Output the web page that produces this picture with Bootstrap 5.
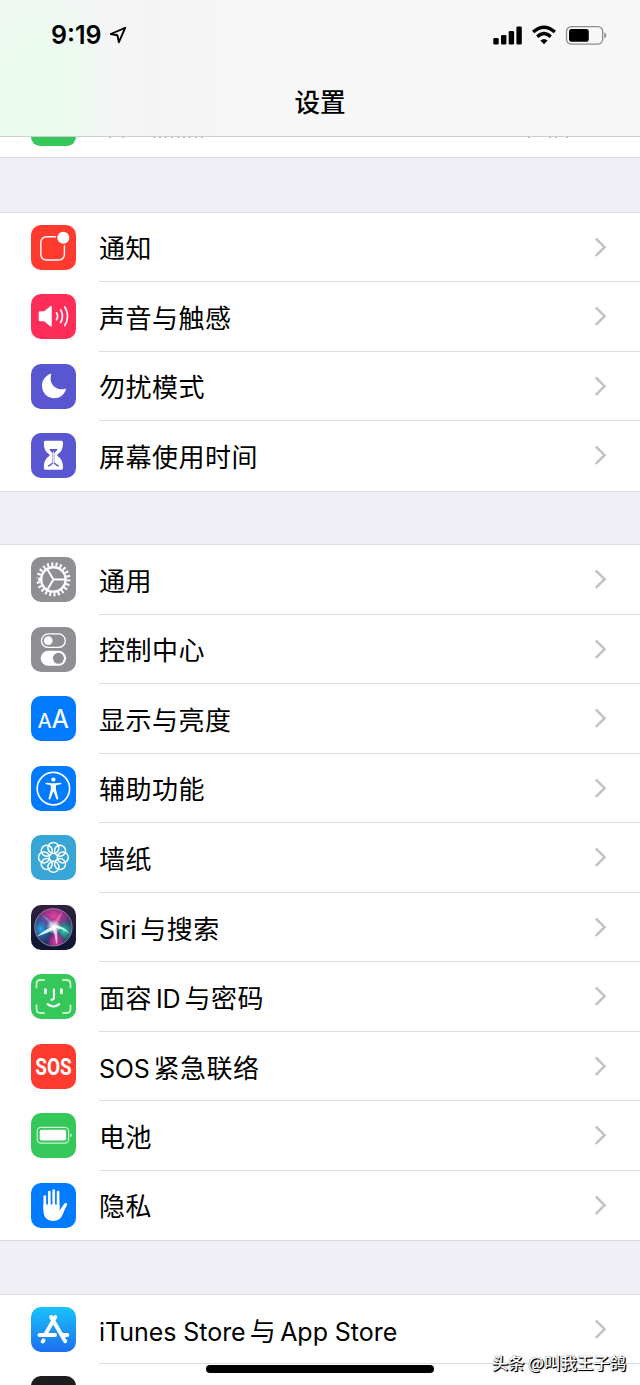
<!DOCTYPE html>
<html lang="zh-CN">
<head>
  <meta charset="UTF-8" />
  <meta name="viewport" content="width=device-width, initial-scale=1.0" />
  <title>设置</title>
  <link href="https://cdn.jsdelivr.net/npm/bootstrap@5.3.0/dist/css/bootstrap.min.css" rel="stylesheet" />
  <style>
    body {
      height: 1385px;
      color: #000;
      background: #f0eff5;
      font-family: Inter, "Noto Sans CJK SC", sans-serif;
    }

    .top-bar {
      height: 137px;
      background:
        radial-gradient(ellipse 75px 125px at 40px 100px, #eafced 0%, rgba(234, 252, 237, 0.8) 45%, rgba(234, 252, 237, 0) 100%),
        linear-gradient(90deg, #f1f8f4 0, #f4f6f5 80px, #f4f4f4 150px, #f7f7f7 250px);
      border-bottom: 1px solid #cfcfd1;
    }

    .status {
      height: 69px;
      padding: 0 33px 0 51px;
    }

    .clock {
      padding-top: 2px;
      font-size: 25px;
      font-weight: 600;
    }

    .page-title {
      height: 67px;
      padding-bottom: 2px;
      font-family: "Noto Sans CJK SC", sans-serif;
      font-size: 25.6px;
      font-weight: 500;
    }

    .peek {
      height: 21px;
      padding-left: 31px;
      border-bottom: 1px solid #dcdce0;
    }

    .peek-icon {
      width: 45px;
      height: 9px;
      background: #35c759;
      border-radius: 0 0 10px 10px;
    }

    .group {
      margin-top: 52.5px;
      border-top: 1px solid #dcdce0;
      border-bottom: 1px solid #dcdce0;
    }

    .group:first-child {
      margin-top: 53.5px;
    }

    .setting {
      height: 69.5px;
      padding-left: 31px;
    }

    .setting-body {
      margin-left: 23px;
      padding-right: 33px;
      border-bottom: 1px solid #dedee1;
    }

    .setting:last-child .setting-body {
      border-bottom-color: transparent;
    }

    .app-icon {
      width: 45px;
      height: 45px;
      border-radius: 10px;
      overflow: visible;
    }

    .chevron {
      width: 13px;
      height: 22px;
      fill: none;
      stroke: #c3c3c6;
      stroke-width: 2.5;
    }

    .label {
      font-family: "Noto Sans CJK SC", sans-serif;
      font-size: 26px;
      line-height: 38px;
      letter-spacing: 0.5px;
      padding-top: 1px;
      white-space: nowrap;
    }

    .label.mixed {
      padding-top: 4px;
    }

    .label span {
      font-family: Inter, sans-serif;
      font-size: 25px;
      letter-spacing: -0.2px;
    }

    .label .wide {
      letter-spacing: -0.05px;
    }

    .c-red { background: #ff3b30; }
    .c-pink { background: #ff2d58; }
    .c-indigo { background: #5856d0; }
    .c-gray { background: #8e8e93; }
    .c-blue { background: #007aff; }
    .c-sky { background: #37a6d6; }
    .c-green { background: #35c759; }
    .c-store { background: linear-gradient(#19c3fb, #1c6ff0); }
    .c-dark { background: #1d1d1f; }

    .home-bar {
      left: 206px;
      top: 1365px;
      width: 228px;
      height: 8px;
      background: #000;
    }

    .watermark {
      right: 14px;
      top: 1350px;
      font-family: "Noto Sans CJK SC", sans-serif;
      font-size: 16.4px;
      line-height: 24px;
      font-weight: 500;
      color: #fff;
      text-shadow: 1px 1px 0 #000, 1px 1px 1px #000, 0 0 1px #555;
    }
  </style>
</head>
<body class="position-relative overflow-hidden">
  <svg class="d-none">
    <symbol id="chevron" viewBox="0 0 13 22"><path d="M1.8 2.500L10.6 11.200 1.8 19.900" /></symbol>
  </svg>

  <header class="top-bar">
    <div class="status d-flex align-items-center justify-content-between">
      <div class="d-flex align-items-center gap-2">
        <span class="clock">9:19</span>
        <svg width="18" height="18" viewBox="0 0 18 18" fill="none" stroke="#000" stroke-width="1.9" stroke-linejoin="round"><path d="M.7 8L15.200 1.800 8.900 16.200 7.400 9.300z" /></svg>
      </div>
      <svg width="115" height="22" viewBox="0 0 115 22">
        <rect x="1.3" y="14" width="5.4" height="6.5" rx="1.3" />
        <rect x="9" y="11" width="5.4" height="9.5" rx="1.3" />
        <rect x="16.7" y="7" width="5.4" height="13.5" rx="1.3" />
        <rect x="24.4" y="2.5" width="5.4" height="18" rx="1.3" />
        <g fill="none" stroke="#000" stroke-width="3.4">
          <path d="M41.200 8.100Q52 -1.500 62.800 8.100" />
          <path d="M45.300 12.700Q52 6.300 58.700 12.700" />
        </g>
        <path d="M48.400 16.500Q52 13.400 55.600 16.500L52 20.200z" />
        <rect x="74.5" y="2.6" width="36.2" height="17.6" rx="5" fill="none" stroke="#8d8d8d" stroke-width="1.3" />
        <rect x="77" y="5.1" width="19.8" height="12.6" rx="2.8" />
        <path d="M112.3 8.3q2 1 2 3.1t-2 3.1z" fill="#8d8d8d" />
      </svg>
    </div>
    <h1 class="page-title d-flex align-items-center justify-content-center m-0">设置</h1>
  </header>

  <div class="peek bg-white d-flex align-items-start">
    <div class="peek-icon"></div>
    <svg width="500" height="1" viewBox="0 0 500 1" stroke="#bbb"><path d="M33 .5h5M46 .5h4M77 .5h52M452 .5h4M473 .5h9M490 .5h6" stroke-dasharray="2 4" /></svg>
  </div>

  <main>
    <section class="group bg-white">
      <div class="setting d-flex align-items-center">
        <svg class="app-icon c-red flex-shrink-0" viewBox="0 0 45 45">
          <rect x="9.8" y="11.8" width="23.6" height="23.2" rx="5.5" fill="none" stroke="#fff" stroke-width="1.4" />
          <circle cx="32.3" cy="12.8" r="7.4" fill="#ff3b30" />
          <circle cx="32.3" cy="12.8" r="6" fill="#fff" />
        </svg>
        <div class="setting-body d-flex flex-grow-1 align-items-center justify-content-between h-100">
          <div class="label">通知</div>
          <svg class="chevron"><use href="#chevron" /></svg>
        </div>
      </div>
      <div class="setting d-flex align-items-center">
        <svg class="app-icon c-pink flex-shrink-0" viewBox="0 0 45 45">
          <path d="M9 17.3h4.2l6.3-5.3q1.3-.9 1.3.6v19.2q0 1.5-1.3.6l-6.3-5.2H9q-1.3 0-1.3-1.3v-7.3q0-1.3 1.3-1.3z" fill="#fff" />
          <path d="M25.500 18.800Q27.700 22.200 25.500 25.700M29.600 15.900Q33.400 22.200 29.600 28.600M33.800 13Q39.400 22.200 33.800 31.500" fill="none" stroke="#fff" stroke-width="1.700" stroke-linecap="round" />
        </svg>
        <div class="setting-body d-flex flex-grow-1 align-items-center justify-content-between h-100">
          <div class="label">声音与触感</div>
          <svg class="chevron"><use href="#chevron" /></svg>
        </div>
      </div>
      <div class="setting d-flex align-items-center">
        <svg class="app-icon c-indigo flex-shrink-0" viewBox="0 0 45 45">
          <path d="M19.5 9.7C14.4 11.6 11 16.3 11 21.7 11 28.7 16.5 34.2 23.3 34.2 28.6 34.2 33.1 30.9 34.9 25.7 35.1 24.7 34.6 24.5 33.8 24.8 25.6 27.4 17.2 20.4 20.2 10.6 20.4 9.8 20.2 9.5 19.5 9.7z" fill="#fff" />
        </svg>
        <div class="setting-body d-flex flex-grow-1 align-items-center justify-content-between h-100">
          <div class="label">勿扰模式</div>
          <svg class="chevron"><use href="#chevron" /></svg>
        </div>
      </div>
      <div class="setting d-flex align-items-center">
        <svg class="app-icon c-indigo flex-shrink-0" viewBox="0 0 45 45">
          <path d="M14.200 7.800h16.400q1.400 0 1.400 1.900 0 8.600-5.200 11.500-1.600 1 0 2 5.200 3 5.200 11.600 0 1.900-1.400 1.900H14.200q-1.400 0-1.400-1.900 0-8.600 5.200-11.600 1.600-1 0-2-5.200-2.900-5.200-11.500 0-1.900 1.400-1.900z" fill="#fff" />
          <path d="M18.300 16h8.200q-.8 2.300-2.700 3.500-.5.400-.5.900v9.200l4.500 2.800v1H17v-1l4.500-2.800v-9.200q0-.5-.5-.9-1.900-1.200-2.700-3.500z" fill="#5856d0" />
          <path d="M22.400 18.500V31M18.500 34q2-2.300 3.900-2.800 1.900.5 3.900 2.800z" fill="#fff" stroke="#fff" stroke-width=".9" />
        </svg>
        <div class="setting-body d-flex flex-grow-1 align-items-center justify-content-between h-100">
          <div class="label">屏幕使用时间</div>
          <svg class="chevron"><use href="#chevron" /></svg>
        </div>
      </div>
    </section>

    <section class="group bg-white">
      <div class="setting d-flex align-items-center">
        <svg class="app-icon c-gray flex-shrink-0" viewBox="0 0 45 45" fill="none" stroke="#fff">
          <circle cx="22.4" cy="22.4" r="12.2" stroke-width="2.4" />
          <circle cx="22.4" cy="22.4" r="15.1" stroke-width="3.8" pathLength="88" stroke-dasharray="1.9 2.1" />
          <path d="M22.4 22.4H34.500M22.4 22.4L16.200 11.900M22.4 22.4L16.200 32.900" stroke-width="2" />
        </svg>
        <div class="setting-body d-flex flex-grow-1 align-items-center justify-content-between h-100">
          <div class="label">通用</div>
          <svg class="chevron"><use href="#chevron" /></svg>
        </div>
      </div>
      <div class="setting d-flex align-items-center">
        <svg class="app-icon c-gray flex-shrink-0" viewBox="0 0 45 45">
          <rect x="10.500" y="6.900" width="23.800" height="13.500" rx="6.750" fill="none" stroke="#fff" stroke-width="1.400" />
          <circle cx="17.200" cy="13.650" r="4.400" fill="#fff" />
          <rect x="9.700" y="23.800" width="25.400" height="15" rx="7.500" fill="#fff" />
          <circle cx="27.400" cy="31.300" r="5.500" fill="#8e8e93" />
        </svg>
        <div class="setting-body d-flex flex-grow-1 align-items-center justify-content-between h-100">
          <div class="label">控制中心</div>
          <svg class="chevron"><use href="#chevron" /></svg>
        </div>
      </div>
      <div class="setting d-flex align-items-center">
        <svg class="app-icon c-blue flex-shrink-0" viewBox="0 0 45 45" fill="#fff" stroke="#fff" stroke-width=".2" font-family="Inter, sans-serif">
          <text x="6.800" y="32" font-size="19.400" textLength="13.800" lengthAdjust="spacingAndGlyphs">A</text>
          <text x="20.800" y="32" font-size="25.600" textLength="17" lengthAdjust="spacingAndGlyphs">A</text>
        </svg>
        <div class="setting-body d-flex flex-grow-1 align-items-center justify-content-between h-100">
          <div class="label">显示与亮度</div>
          <svg class="chevron"><use href="#chevron" /></svg>
        </div>
      </div>
      <div class="setting d-flex align-items-center">
        <svg class="app-icon c-blue flex-shrink-0" viewBox="0 0 45 45">
          <circle cx="22.400" cy="22.600" r="16.200" fill="none" stroke="#fff" stroke-width="1.700" />
          <circle cx="22.400" cy="13.600" r="2.100" fill="#fff" />
          <path d="M15.200 16.700l5.300.6h3.800l5.300-.6q.8 0 .8.700t-.7.9l-4.700 1v4.200l2.200 8.700q.2 1-.6 1.300t-1.200-.6l-3-7.700-3 7.700q-.4.900-1.200.6t-.6-1.300l2.200-8.700v-4.200l-4.700-1q-.7-.2-.7-.9t.8-.7z" fill="#fff" />
        </svg>
        <div class="setting-body d-flex flex-grow-1 align-items-center justify-content-between h-100">
          <div class="label">辅助功能</div>
          <svg class="chevron"><use href="#chevron" /></svg>
        </div>
      </div>
      <div class="setting d-flex align-items-center">
        <svg class="app-icon c-sky flex-shrink-0" viewBox="-22.400 -22.400 45 45" fill="none" stroke="#fff" stroke-width="1.500">
          <circle cx="9.400" cy="0" r="5.500" />
          <circle cx="6.650" cy="6.650" r="5.500" />
          <circle cx="0" cy="9.400" r="5.500" />
          <circle cx="-6.650" cy="6.650" r="5.500" />
          <circle cx="-9.400" cy="0" r="5.500" />
          <circle cx="-6.650" cy="-6.650" r="5.500" />
          <circle cx="0" cy="-9.400" r="5.500" />
          <circle cx="6.650" cy="-6.650" r="5.500" />
        </svg>
        <div class="setting-body d-flex flex-grow-1 align-items-center justify-content-between h-100">
          <div class="label">墙纸</div>
          <svg class="chevron"><use href="#chevron" /></svg>
        </div>
      </div>
      <div class="setting d-flex align-items-center">
        <svg class="app-icon flex-shrink-0" viewBox="0 0 45 45">
          <defs>
            <linearGradient id="siriBack" x1="0" y1="0" x2="0" y2="1"><stop offset="0" stop-color="#30203f" /><stop offset="1" stop-color="#0c1630" /></linearGradient>
            <radialGradient id="siriPink" cx=".5" cy=".5" r=".5"><stop offset="0" stop-color="#e0409f" /><stop offset=".6" stop-color="#a8308f" stop-opacity=".8" /><stop offset="1" stop-color="#8a2580" stop-opacity="0" /></radialGradient>
            <radialGradient id="siriBlue" cx=".5" cy=".5" r=".5"><stop offset="0" stop-color="#2fa9e8" /><stop offset="1" stop-color="#2558a8" stop-opacity="0" /></radialGradient>
            <radialGradient id="siriTeal" cx=".5" cy=".5" r=".5"><stop offset="0" stop-color="#35d6b0" /><stop offset="1" stop-color="#168a80" stop-opacity="0" /></radialGradient>
            <radialGradient id="siriGlow" cx=".5" cy=".5" r=".5"><stop offset="0" stop-color="#fff" /><stop offset=".35" stop-color="#fff" stop-opacity=".75" /><stop offset="1" stop-color="#fff" stop-opacity="0" /></radialGradient>
            <clipPath id="siriOrb"><circle cx="22.400" cy="22.300" r="18.500" /></clipPath>
          </defs>
          <rect width="45" height="45" rx="10" fill="url(#siriBack)" />
          <g clip-path="url(#siriOrb)">
            <rect width="45" height="45" fill="#26305e" />
            <ellipse cx="23" cy="11" rx="19" ry="15" fill="url(#siriPink)" />
            <ellipse cx="10" cy="24" rx="14" ry="16" fill="url(#siriBlue)" />
            <ellipse cx="33" cy="26" rx="13" ry="13" fill="url(#siriTeal)" />
            <ellipse cx="25" cy="37" rx="9" ry="11" fill="url(#siriPink)" />
            <path d="M22 22Q14 24 6 31.500 15 29 24 24z" fill="#c6fbff" />
            <path d="M21 22Q24 30 25.500 40 28 30 24 21z" fill="#ffb3ee" />
            <path d="M22 23Q32 23 39 29 33 21 24 20z" fill="#b9ffec" />
            <path d="M20 22Q17 15 10 10 19 13 24 21z" fill="#73c5fa" opacity=".5" />
            <path d="M22 22Q24 13 31 7 29 15 25 22z" fill="#ff8fcb" opacity=".5" />
            <circle cx="22.600" cy="22" r="7.500" fill="url(#siriGlow)" />
          </g>
          <circle cx="22.400" cy="22.300" r="18.700" fill="none" stroke="#a996b8" stroke-width=".8" />
        </svg>
        <div class="setting-body d-flex flex-grow-1 align-items-center justify-content-between h-100">
          <div class="label mixed"><span class="me-1">Siri</span>与搜索</div>
          <svg class="chevron"><use href="#chevron" /></svg>
        </div>
      </div>
      <div class="setting d-flex align-items-center">
        <svg class="app-icon c-green flex-shrink-0" viewBox="0 0 45 45" fill="none" stroke="#fff" stroke-linecap="round">
          <path d="M5.500 13.500V10Q5.500 6 9.500 6H13M32 6h3.500Q39.500 6 39.500 10v3.500M39.500 31.500V35Q39.500 39 35.500 39H32M13 39H9.500Q5.500 39 5.500 35v-3.500" stroke="#c5f5cf" stroke-width="1.800" />
          <path d="M14.400 15.500v3.400M30.400 15.500v3.400" stroke-width="2.700" />
          <path d="M22.900 15.200v8.300Q22.900 25.700 20.300 25.700" stroke-width="2" />
          <path d="M16.600 30.100Q22.400 34.800 28.200 30.100" stroke-width="2" />
        </svg>
        <div class="setting-body d-flex flex-grow-1 align-items-center justify-content-between h-100">
          <div class="label mixed">面容<span class="mx-1">ID</span>与密码</div>
          <svg class="chevron"><use href="#chevron" /></svg>
        </div>
      </div>
      <div class="setting d-flex align-items-center">
        <svg class="app-icon c-red flex-shrink-0" viewBox="0 0 45 45">
          <text x="4.300" y="31" font-family="Roboto, sans-serif" font-size="23" font-weight="700" fill="#fff" textLength="36.400" lengthAdjust="spacingAndGlyphs">SOS</text>
        </svg>
        <div class="setting-body d-flex flex-grow-1 align-items-center justify-content-between h-100">
          <div class="label mixed"><span class="me-1">SOS</span>紧急联络</div>
          <svg class="chevron"><use href="#chevron" /></svg>
        </div>
      </div>
      <div class="setting d-flex align-items-center">
        <svg class="app-icon c-green flex-shrink-0" viewBox="0 0 45 45">
          <rect x="6.200" y="14.300" width="31.400" height="15.800" rx="3.800" fill="none" stroke="#c9f3d2" stroke-width="1.200" />
          <rect x="8.700" y="16.800" width="26.400" height="10.800" rx="1.800" fill="#fff" />
          <path d="M39.200 20.200q1.600.6 1.600 2t-1.600 2z" fill="#c9f3d2" />
        </svg>
        <div class="setting-body d-flex flex-grow-1 align-items-center justify-content-between h-100">
          <div class="label">电池</div>
          <svg class="chevron"><use href="#chevron" /></svg>
        </div>
      </div>
      <div class="setting d-flex align-items-center">
        <svg class="app-icon c-blue flex-shrink-0" viewBox="0 0 45 45">
          <path d="M13.800 13.500V26M18.300 9V26M22.700 7.500V26M27.100 9V26" fill="none" stroke="#fff" stroke-width="2.700" stroke-linecap="round" />
          <path d="M12.450 21.500h16v6.300l4.200-6.300q1.500-1.900 3.100-1.200 1 .6.200 2-2.600 4.600-4.100 9-2.300 6.600-9.700 6.600-9.700 0-9.700-10.200z" fill="#fff" />
        </svg>
        <div class="setting-body d-flex flex-grow-1 align-items-center justify-content-between h-100">
          <div class="label">隐私</div>
          <svg class="chevron"><use href="#chevron" /></svg>
        </div>
      </div>
    </section>

    <section class="group bg-white">
      <div class="setting d-flex align-items-center">
        <svg class="app-icon c-store flex-shrink-0" viewBox="0 0 45 45" fill="none" stroke="#fff" stroke-width="3.900" stroke-linecap="round">
          <path d="M24.300 10L14.800 26.500M12.600 33.300L11.700 34.400M20.100 10L34.200 34.300M8.500 28H24M32.500 28H36.300" />
        </svg>
        <div class="setting-body d-flex flex-grow-1 align-items-center justify-content-between h-100">
          <div class="label mixed"><span class="wide me-1">iTunes Store</span>与<span class="wide ms-1">App Store</span></div>
          <svg class="chevron"><use href="#chevron" /></svg>
        </div>
      </div>
      <div class="setting d-flex align-items-center">
        <div class="app-icon c-dark flex-shrink-0"></div>
      </div>
    </section>
  </main>

  <div class="home-bar position-absolute rounded-pill"></div>
  <div class="watermark position-absolute text-nowrap">头条 @叫我王子鸽</div>

  <script src="https://cdn.jsdelivr.net/npm/bootstrap@5.3.0/dist/js/bootstrap.bundle.min.js"></script>
</body>
</html>
